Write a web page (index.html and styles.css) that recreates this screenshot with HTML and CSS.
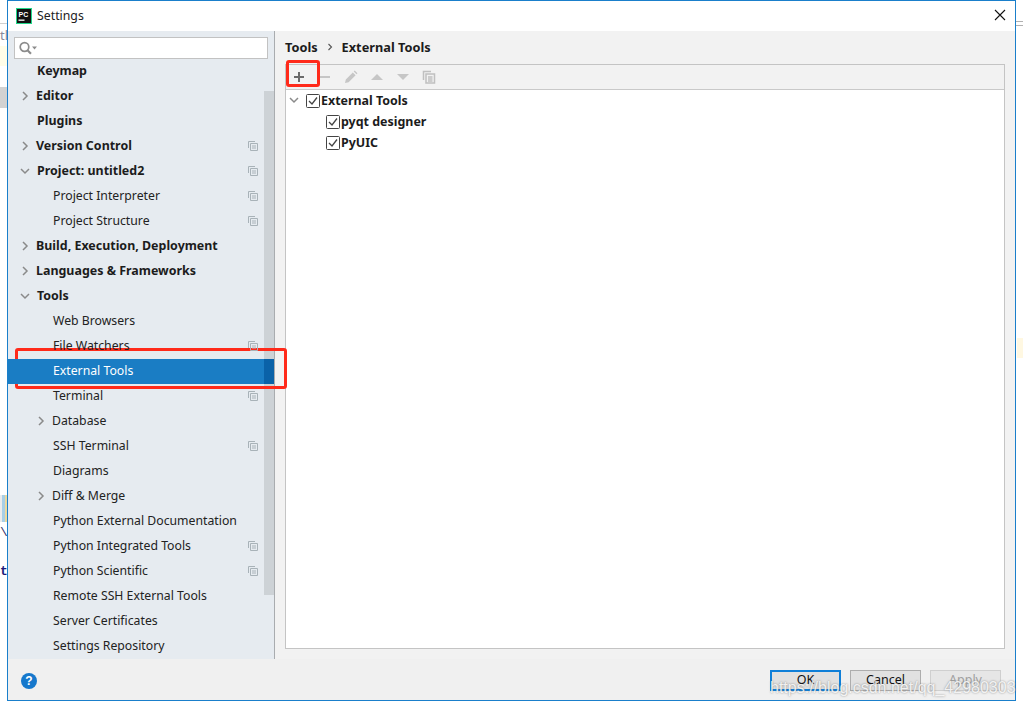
FILE: index.html
```html
<!DOCTYPE html>
<html lang="en">
<head>
<meta charset="utf-8">
<title>Settings</title>
<link rel="stylesheet" href="styles.css">
</head>
<body>
<div class="backdrop">
  <div class="bg-line bg-l1"></div>
  <div class="bg-text bg-t1">tl</div>
  <div class="bg-yellow-l"></div>
  <div class="bg-gray-l"></div>
  <div class="bg-strip-l"></div>
  <div class="bg-code bg-c1">\v</div>
  <div class="bg-code bg-c2">tl</div>
  <div class="bg-line bg-r1"></div>
  <div class="bg-line bg-r2"></div>
  <div class="bg-yellow-r"></div>
</div>

<div class="dialog">
  <header class="titlebar">
    <svg class="logo" width="16" height="16" viewBox="0 0 16 16"><rect x="0.5" y="0.5" width="15" height="15" fill="#111" stroke="#21d789"/><text x="2.5" y="8.5" class="logo-text">PC</text><rect x="2.5" y="11.5" width="6" height="1.3" fill="#fff"/></svg>
    <span class="title">Settings</span>
    <svg class="close" width="12" height="12" viewBox="0 0 12 12"><path d="M1 1l10 10M11 1L1 11" stroke="#111" stroke-width="1.1" fill="none"/></svg>
  </header>

  <div class="main">
    <aside class="sidebar">
      <div class="search-area">
        <div class="search">
          <svg width="18" height="14" viewBox="0 0 18 14"><circle cx="5.500" cy="6" r="4.300" fill="none" stroke="#8c8c8c" stroke-width="1.700"/><path d="M8.500 9.200l3.500 3.500" stroke="#8c8c8c" stroke-width="2.200"/><path d="M13 5.500h5l-2.500 3z" fill="#8c8c8c"/></svg>
        </div>
      </div>
      <ul class="tree">
        <li class="row bold"><span class="label l1">Keymap</span></li>
        <li class="row bold"><svg class="chev c1" width="8" height="10" viewBox="0 0 8 10"><path d="M2 1l4 4-4 4"/></svg><span class="label l1c">Editor</span></li>
        <li class="row bold"><span class="label l1">Plugins</span></li>
        <li class="row bold"><svg class="chev c1" width="8" height="10" viewBox="0 0 8 10"><path d="M2 1l4 4-4 4"/></svg><span class="label l1c">Version Control</span><svg class="copy" width="10" height="10" viewBox="0 0 10 10"><path d="M.5 7V.5H7M2.500 2.500h7v7h-7zM4 5h4M4 7h4"/></svg></li>
        <li class="row bold"><svg class="chev c1 open" width="10" height="8" viewBox="0 0 10 8"><path d="M1 2l4 4 4-4"/></svg><span class="label l1">Project: untitled2</span><svg class="copy" width="10" height="10" viewBox="0 0 10 10"><path d="M.5 7V.5H7M2.500 2.500h7v7h-7zM4 5h4M4 7h4"/></svg></li>
        <li class="row"><span class="label l2">Project Interpreter</span><svg class="copy" width="10" height="10" viewBox="0 0 10 10"><path d="M.5 7V.5H7M2.500 2.500h7v7h-7zM4 5h4M4 7h4"/></svg></li>
        <li class="row"><span class="label l2">Project Structure</span><svg class="copy" width="10" height="10" viewBox="0 0 10 10"><path d="M.5 7V.5H7M2.500 2.500h7v7h-7zM4 5h4M4 7h4"/></svg></li>
        <li class="row bold"><svg class="chev c1" width="8" height="10" viewBox="0 0 8 10"><path d="M2 1l4 4-4 4"/></svg><span class="label l1c">Build, Execution, Deployment</span></li>
        <li class="row bold"><svg class="chev c1" width="8" height="10" viewBox="0 0 8 10"><path d="M2 1l4 4-4 4"/></svg><span class="label l1c">Languages &amp; Frameworks</span></li>
        <li class="row bold"><svg class="chev c1 open" width="10" height="8" viewBox="0 0 10 8"><path d="M1 2l4 4 4-4"/></svg><span class="label l1">Tools</span></li>
        <li class="row"><span class="label l2">Web Browsers</span></li>
        <li class="row"><span class="label l2">File Watchers</span><svg class="copy" width="10" height="10" viewBox="0 0 10 10"><path d="M.5 7V.5H7M2.500 2.500h7v7h-7zM4 5h4M4 7h4"/></svg></li>
        <li class="row selected"><span class="label l2">External Tools</span><span class="thumb-sel"></span></li>
        <li class="row"><span class="label l2">Terminal</span><svg class="copy" width="10" height="10" viewBox="0 0 10 10"><path d="M.5 7V.5H7M2.500 2.500h7v7h-7zM4 5h4M4 7h4"/></svg></li>
        <li class="row"><svg class="chev c2" width="8" height="10" viewBox="0 0 8 10"><path d="M2 1l4 4-4 4"/></svg><span class="label l2c">Database</span></li>
        <li class="row"><span class="label l2">SSH Terminal</span><svg class="copy" width="10" height="10" viewBox="0 0 10 10"><path d="M.5 7V.5H7M2.500 2.500h7v7h-7zM4 5h4M4 7h4"/></svg></li>
        <li class="row"><span class="label l2">Diagrams</span></li>
        <li class="row"><svg class="chev c2" width="8" height="10" viewBox="0 0 8 10"><path d="M2 1l4 4-4 4"/></svg><span class="label l2c">Diff &amp; Merge</span></li>
        <li class="row"><span class="label l2">Python External Documentation</span></li>
        <li class="row"><span class="label l2">Python Integrated Tools</span><svg class="copy" width="10" height="10" viewBox="0 0 10 10"><path d="M.5 7V.5H7M2.500 2.500h7v7h-7zM4 5h4M4 7h4"/></svg></li>
        <li class="row"><span class="label l2">Python Scientific</span><svg class="copy" width="10" height="10" viewBox="0 0 10 10"><path d="M.5 7V.5H7M2.500 2.500h7v7h-7zM4 5h4M4 7h4"/></svg></li>
        <li class="row"><span class="label l2">Remote SSH External Tools</span></li>
        <li class="row"><span class="label l2">Server Certificates</span></li>
        <li class="row"><span class="label l2">Settings Repository</span></li>
      </ul>
      <div class="scroll-thumb"></div>
    </aside>

    <section class="content">
      <div class="crumbs"><span>Tools</span><svg class="crumb-sep" width="6" height="8" viewBox="0 0 6 8"><path d="M1.500 1l3 3-3 3"/></svg><span>External Tools</span></div>
      <div class="panel">
        <div class="toolbar">
          <svg class="tb plus" width="12" height="12" viewBox="0 0 12 12"><path d="M6 1v10M1 6h10"/></svg>
          <svg class="tb minus" width="12" height="12" viewBox="0 0 12 12"><path d="M1 6h10"/></svg>
          <svg class="tb fill" width="14" height="14" viewBox="0 0 14 14"><path d="M1 13l.8-3.600 7-7 2.800 2.800-7 7zM9.700 1.500l1-1 2.800 2.800-1 1z"/></svg>
          <svg class="tb fill" width="14" height="14" viewBox="0 0 14 14"><path d="M1 10l6-6 6 6z"/></svg>
          <svg class="tb fill" width="14" height="14" viewBox="0 0 14 14"><path d="M1 4h12l-6 6z"/></svg>
          <svg class="tb copybig" width="14" height="14" viewBox="0 0 14 14"><path d="M1.500 10V1.500H9M4 4h8.500v9H4zM6 7h4.500M6 9h4.500M6 11h4.500"/></svg>
        </div>
        <div class="tools-tree">
          <div class="t-row t-root">
            <svg class="chev t-chev" width="10" height="8" viewBox="0 0 10 8"><path d="M1 2l4 4 4-4"/></svg>
            <svg class="check" width="14" height="14" viewBox="0 0 14 14"><rect x=".5" y=".5" width="13" height="13" rx="1" fill="#fff" stroke="#444"/><path d="M3 7l3 3 5-6.500" fill="none" stroke="#444" stroke-width="1.300"/></svg>
            <span>External Tools</span>
          </div>
          <div class="t-row t-child">
            <svg class="check" width="14" height="14" viewBox="0 0 14 14"><rect x=".5" y=".5" width="13" height="13" rx="1" fill="#fff" stroke="#444"/><path d="M3 7l3 3 5-6.500" fill="none" stroke="#444" stroke-width="1.300"/></svg>
            <span>pyqt designer</span>
          </div>
          <div class="t-row t-child">
            <svg class="check" width="14" height="14" viewBox="0 0 14 14"><rect x=".5" y=".5" width="13" height="13" rx="1" fill="#fff" stroke="#444"/><path d="M3 7l3 3 5-6.500" fill="none" stroke="#444" stroke-width="1.300"/></svg>
            <span>PyUIC</span>
          </div>
        </div>
      </div>
    </section>
  </div>

  <footer class="footer">
    <div class="help"><span class="help-dot">?</span></div>
    <div class="buttons">
      <button class="btn primary">OK</button>
      <button class="btn">Cancel</button>
      <button class="btn disabled">Apply</button>
    </div>
  </footer>
</div>

<div class="mark mark-add"></div>
<div class="mark mark-row"></div>
<div class="watermark">https://blog.csdn.net/qq_42980303</div>
</body>
</html>
```

FILE: styles.css
```css
* { box-sizing: border-box; }
html, body { margin: 0; height: 100%; }
body {
  position: relative;
  width: 1023px;
  height: 708px;
  overflow: hidden;
  background: #fff;
  font-family: "Noto Sans", "Open Sans", sans-serif;
  font-size: 12.250px;
  color: #1c1c1c;
}

/* windows behind the dialog */
.backdrop { position: absolute; inset: 0; }
.bg-line { position: absolute; height: 1px; background: #b0b0b0; }
.bg-l1 { left: 0; top: 23px; width: 7px; background: #d0d0d0; }
.bg-r1 { left: 1016px; top: 21px; width: 7px; }
.bg-r2 { left: 1016px; top: 25px; width: 7px; }
.bg-text { position: absolute; font-size: 13px; color: #8a8a9a; }
.bg-t1 { left: 0; top: 26px; }
.bg-yellow-l { position: absolute; left: 0; top: 46px; width: 7px; height: 20px; background: #fffde8; }
.bg-gray-l { position: absolute; left: 0; top: 87px; width: 7px; height: 21px; background: #d2d2d2; }
.bg-strip-l { position: absolute; left: 0; top: 495px; width: 7px; height: 27px; background: linear-gradient(90deg, #ececec 0 2px, #a8cfe6 2px 5px, #ecd9a0 5px); }
.bg-code { position: absolute; font-family: "Liberation Mono", monospace; font-weight: 700; font-size: 13px; color: #1a1a7a; }
.bg-c1 { left: 0; top: 525px; color: #33336a; font-weight: 400; }
.bg-c2 { left: 0; top: 564px; }
.bg-yellow-r { position: absolute; left: 1017px; top: 338px; width: 6px; height: 20px; background: #fff8e2; }

/* dialog window */
.dialog {
  position: absolute;
  left: 7px;
  top: 0;
  width: 1009px;
  height: 701px;
  display: flex;
  flex-direction: column;
  border: 1px solid #1a7fcb;
  background: #f2f2f2;
}
.titlebar {
  flex: 0 0 30px;
  display: flex;
  align-items: center;
  padding: 0 9px 2px 8px;
  background: #fff;
}
.logo { flex: none; margin-top: 2px; }
.logo-text { font: 700 7px "Liberation Sans", sans-serif; fill: #fff; }
.title { margin-left: 5px; font-size: 12.300px; color: #222; }
.close { margin-left: auto; }

.main { flex: 1; display: flex; min-height: 0; }

/* left tree */
.sidebar {
  position: relative;
  flex: 0 0 267px;
  border-right: 1px solid #a9acaf;
  background: #e6ebf0;
}
.search-area { height: 28px; padding: 6px 6px 0 6px; }
.search {
  height: 22px;
  width: 254px;
  display: flex;
  align-items: center;
  padding-left: 4px;
  background: #fff;
  border: 1px solid #c2c2c2;
}
.tree { margin: 0; padding: 0; list-style: none; }
.row {
  position: relative;
  z-index: 1;
  height: 25px;
  display: flex;
  align-items: center;
  color: #222;
}
.bold { font-weight: 700; font-size: 12.450px; color: #1c1c1c; }
.label { white-space: nowrap; line-height: 23px; padding-bottom: 2px; }
.l1 { padding-left: 29px; }
.l1c { padding-left: 28px; }
.l2 { padding-left: 45px; }
.l2c { padding-left: 44px; }
.selected { background: #1a7dc4; color: #fff; }
.chev { position: absolute; margin-top: -1px; fill: none; stroke: #8a8a8a; stroke-width: 1.500; }
.c1 { left: 13px; }
.c1.open { left: 12px; }
.c2 { left: 29px; }
.copy {
  position: absolute;
  left: 240px;
  margin-top: -1px;
  fill: none;
  stroke: #a8b2b8;
  stroke-width: 1;
}
.scroll-thumb {
  position: absolute;
  right: 0;
  top: 60px;
  width: 10px;
  height: 504px;
  background: #cdd2d6;
}
.thumb-sel { position: absolute; right: 0; top: 0; width: 10px; height: 25px; background: #0a62a8; }

/* right panel */
.content { flex: 1; min-width: 0; padding: 0 10px 10px 10px; display: flex; flex-direction: column; }
.crumbs {
  height: 33px;
  display: flex;
  align-items: center;
  gap: 9px;
  padding-bottom: 1px;
  font-weight: 700;
  font-size: 12.750px;
}
.crumb-sep { fill: none; stroke: #555; stroke-width: 1.100; }
.panel {
  flex: 1;
  display: flex;
  flex-direction: column;
  border: 1px solid #c4c4c4;
  background: #fff;
}
.toolbar {
  flex: 0 0 25px;
  display: flex;
  align-items: center;
  gap: 12px;
  padding-left: 7px;
  background: #f2f2f2;
  border-bottom: 1px solid #c9c9c9;
}
.tb { flex: none; }
.plus { stroke: #6a6a6a; stroke-width: 2; fill: none; }
.minus { stroke: #c6c6c6; stroke-width: 2; fill: none; margin: 0 1px 0 2px; }
.fill { fill: #c6c6c6; }
.copybig { fill: none; stroke: #c0c0c0; stroke-width: 1.500; }
.tools-tree { font-weight: 700; font-size: 12.450px; }
.t-row { height: 21px; display: flex; align-items: center; gap: 1px; color: #1c1c1c; }
.t-root { padding-left: 20px; position: relative; }
.t-child { padding-left: 40px; }
.t-chev { left: 3px; top: 7px; }
.check { flex: none; }

/* footer */
.footer {
  flex: 0 0 41px;
  display: flex;
  align-items: center;
  justify-content: space-between;
  padding: 0 14px 0 13px;
  background: #f0f0f0;
}
.help { width: 18px; height: 18px; margin-top: 4px; }
.help-dot {
  display: block;
  width: 16px;
  height: 16px;
  border-radius: 50%;
  background: #1678cc;
  color: #fff;
  font: 700 12px/16px "Liberation Sans", sans-serif;
  text-align: center;
}
.buttons { display: flex; gap: 9px; padding-top: 1px; }
.btn {
  width: 71px;
  height: 21px;
  padding: 0;
  border: 1px solid #adadad;
  background: #e1e1e1;
  font: 12.500px/1 "Noto Sans", sans-serif;
  color: #111;
}
.primary { border: 2px solid #0f7fd8; }
.disabled { border-color: #cfcfcf; background: #e6e6e6; color: #a0a0a0; }

/* annotations on top of the screenshot */
.mark { position: absolute; border: 3px solid #ff2a1a; border-radius: 3px; }
.mark-add { left: 286px; top: 60px; width: 34px; height: 27px; }
.mark-row { left: 15px; top: 348px; width: 272px; height: 41px; }
.watermark {
  position: absolute;
  left: 770px;
  top: 679px;
  font: 16px/18px "Liberation Sans", sans-serif;
  color: rgba(255,255,255,.85);
  text-shadow: 0 0 2px rgba(90,90,90,.7);
  white-space: nowrap;
}
```
